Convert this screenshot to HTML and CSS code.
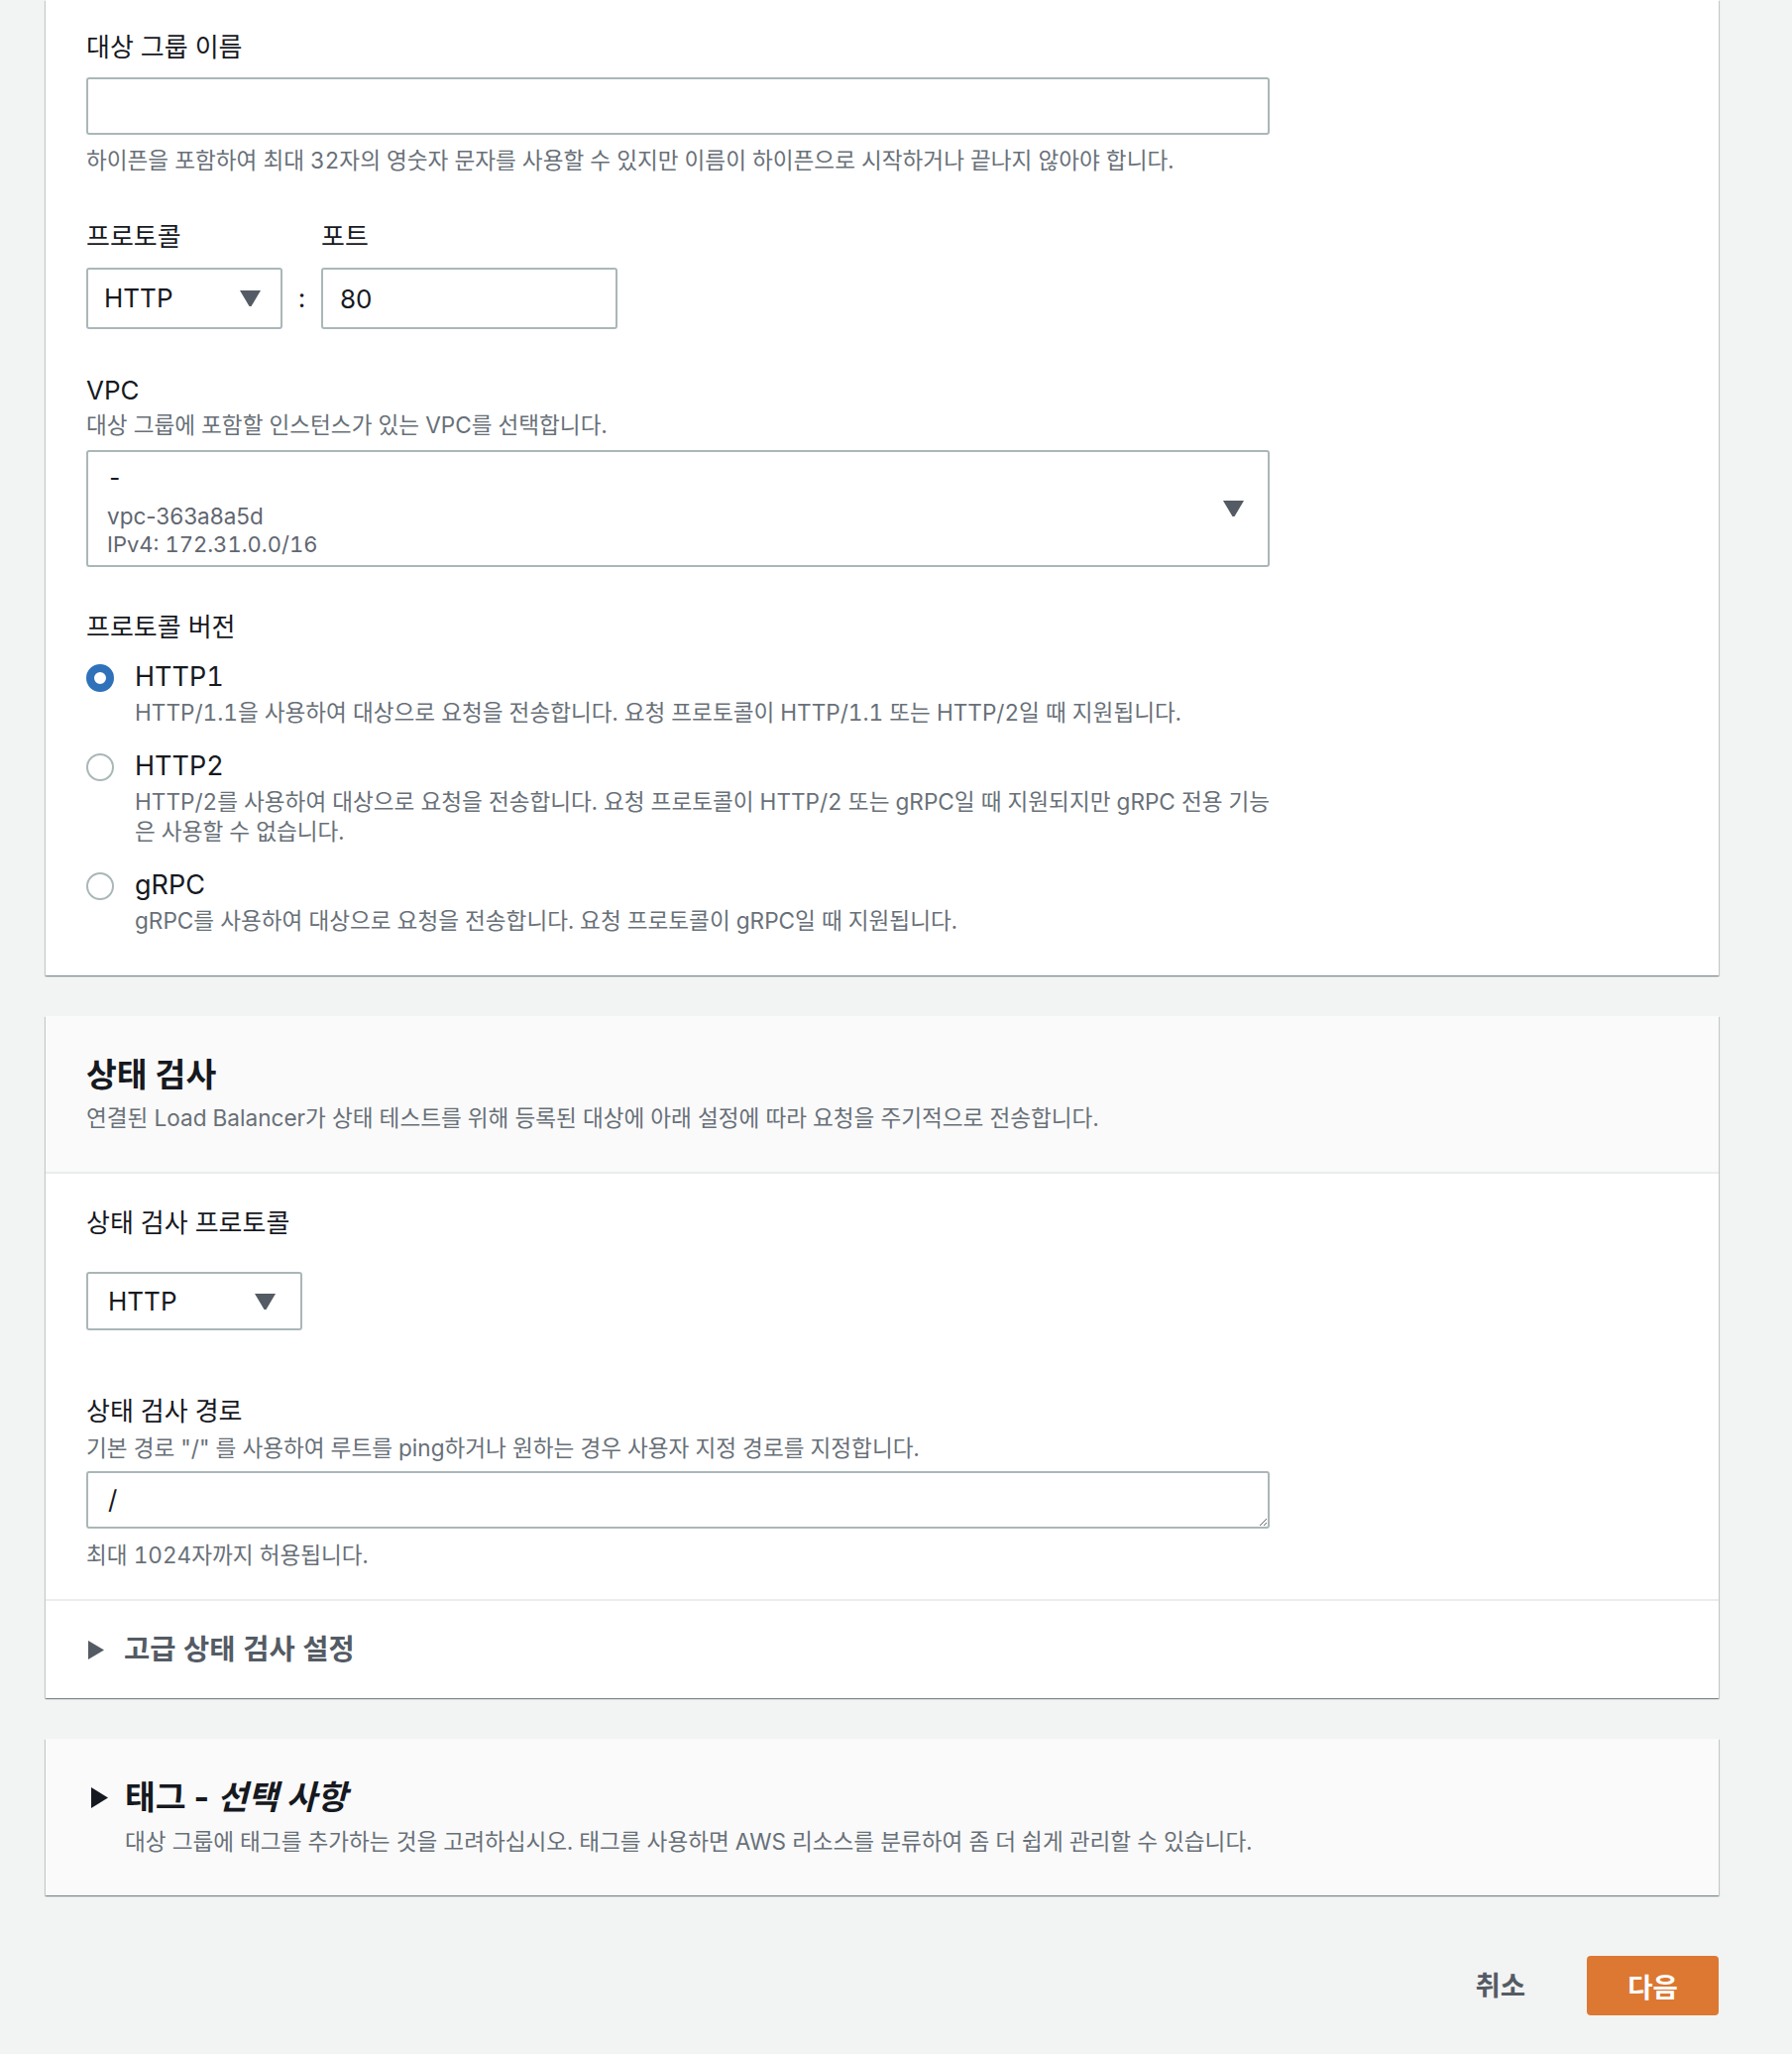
FILE: index.html
```html
<!DOCTYPE html>
<html lang="ko">
<head>
<meta charset="utf-8">
<title>대상 그룹 생성</title>
<link rel="stylesheet" href="styles.css">
</head>
<body>
<main class="page">
  <section class="card card-basic">
    <div class="field">
      <label class="label" for="tg-name">대상 그룹 이름</label>
      <input id="tg-name" class="input input-name" type="text">
      <p class="hint hint-below">하이픈을 포함하여 최대 32자의 영숫자 문자를 사용할 수 있지만 이름이 하이픈으로 시작하거나 끝나지 않아야 합니다.</p>
    </div>

    <div class="field field-gap">
      <div class="proto-grid">
        <span class="label">프로토콜</span>
        <span></span>
        <label class="label" for="tg-port">포트</label>
        <div class="select select-proto">
          <span class="select-value">HTTP</span>
          <svg class="caret" width="21" height="16" viewBox="0 0 21 16"><polygon points="0,0 21,0 11.5,16 9.5,16" fill="#545b64"/></svg>
        </div>
        <span class="colon">:</span>
        <input id="tg-port" class="input input-port" type="text" value="80">
      </div>
    </div>

    <div class="field field-gap">
      <span class="label">VPC</span>
      <p class="hint hint-desc">대상 그룹에 포함할 인스턴스가 있는 VPC를 선택합니다.</p>
      <div class="vpc-select">
        <div class="vpc-lines">
          <span class="vpc-name">-</span>
          <span class="vpc-tag vpc-tag-first">vpc-363a8a5d</span>
          <span class="vpc-tag">IPv4: 172.31.0.0/16</span>
        </div>
        <svg class="caret" width="21" height="16" viewBox="0 0 21 16"><polygon points="0,0 21,0 11.5,16 9.5,16" fill="#545b64"/></svg>
      </div>
    </div>

    <div class="field field-gap-version">
      <span class="label">프로토콜 버전</span>
      <div class="radios">
        <div class="radio">
          <span class="radio-dot radio-dot-on"></span>
          <div class="radio-body">
            <span class="radio-label">HTTP1</span>
            <p class="hint radio-desc">HTTP/1.1을 사용하여 대상으로 요청을 전송합니다. 요청 프로토콜이 HTTP/1.1 또는 HTTP/2일 때 지원됩니다.</p>
          </div>
        </div>
        <div class="radio">
          <span class="radio-dot"></span>
          <div class="radio-body">
            <span class="radio-label">HTTP2</span>
            <p class="hint radio-desc">HTTP/2를 사용하여 대상으로 요청을 전송합니다. 요청 프로토콜이 HTTP/2 또는 gRPC일 때 지원되지만 gRPC 전용 기능<br>은 사용할 수 없습니다.</p>
          </div>
        </div>
        <div class="radio">
          <span class="radio-dot"></span>
          <div class="radio-body">
            <span class="radio-label">gRPC</span>
            <p class="hint radio-desc">gRPC를 사용하여 대상으로 요청을 전송합니다. 요청 프로토콜이 gRPC일 때 지원됩니다.</p>
          </div>
        </div>
      </div>
    </div>
  </section>

  <section class="card card-health">
    <header class="card-header">
      <h2 class="title">상태 검사</h2>
      <p class="hint header-desc">연결된 Load Balancer가 상태 테스트를 위해 등록된 대상에 아래 설정에 따라 요청을 주기적으로 전송합니다.</p>
    </header>
    <div class="card-body">
      <div class="field">
        <span class="label">상태 검사 프로토콜</span>
        <div class="select select-health">
          <span class="select-value">HTTP</span>
          <svg class="caret" width="21" height="16" viewBox="0 0 21 16"><polygon points="0,0 21,0 11.5,16 9.5,16" fill="#545b64"/></svg>
        </div>
      </div>
      <div class="field field-gap-path">
        <label class="label" for="hc-path">상태 검사 경로</label>
        <p class="hint hint-desc-path">기본 경로 "/" 를 사용하여 루트를 ping하거나 원하는 경우 사용자 지정 경로를 지정합니다.</p>
        <textarea id="hc-path" class="textarea" rows="1">/</textarea>
        <p class="hint hint-below-path">최대 1024자까지 허용됩니다.</p>
      </div>
    </div>
    <div class="expander">
      <svg class="expander-arrow" width="16" height="19" viewBox="0 0 16 19"><polygon points="0,0 16,9.5 0,19" fill="#545b64"/></svg>
      <span class="expander-title">고급 상태 검사 설정</span>
    </div>
  </section>

  <section class="card card-tags">
    <div class="tags-head">
      <svg class="tags-arrow" width="17" height="21" viewBox="0 0 17 21"><polygon points="0,0 17,10.5 0,21" fill="#16191f"/></svg>
      <h2 class="title">태그 - <em>선택 사항</em></h2>
    </div>
    <p class="hint tags-desc">대상 그룹에 태그를 추가하는 것을 고려하십시오. 태그를 사용하면 AWS 리소스를 분류하여 좀 더 쉽게 관리할 수 있습니다.</p>
  </section>

  <footer class="actions">
    <button class="btn-link" type="button">취소</button>
    <button class="btn-primary" type="button">다음</button>
  </footer>
</main>
</body>
</html>
```

FILE: styles.css
```css
* {
  box-sizing: border-box;
}

body {
  margin: 0;
  background: #f2f3f3;
  font-family: Inter, "Noto Sans CJK KR", sans-serif;
  font-variant-numeric: tabular-nums;
  color: #16191f;
}

.page {
  width: 1688px;
  margin-left: 46px;
  padding-bottom: 39px;
}

.card {
  background: #ffffff;
  box-shadow: 0 1px 1px 0 rgba(0, 28, 36, 0.3), 1px 1px 1px 0 rgba(0, 28, 36, 0.15), -1px 1px 1px 0 rgba(0, 28, 36, 0.15);
}

.card-basic {
  padding: 32px 41px 40px;
}

.field {
  display: flex;
  flex-direction: column;
  align-items: flex-start;
}

.field-gap {
  margin-top: 46px;
}

.field-gap-version {
  margin-top: 45px;
}

.label {
  display: block;
  font-size: 26px;
  line-height: 32px;
  color: #16191f;
  white-space: nowrap;
}

.hint {
  margin: 0;
  font-size: 22.6px;
  line-height: 30px;
  color: #687078;
}

.hint-below {
  margin-top: 11px;
}

.hint-desc {
  margin-top: 4px;
}

.input,
.textarea {
  display: block;
  font-family: inherit;
  font-size: 26px;
  color: #16191f;
  background: #ffffff;
  border: 2px solid #aab7b8;
  border-radius: 3px;
  outline: none;
}

.input {
  height: 58px;
  padding: 0 17px;
}

.input-name {
  width: 1194px;
  margin-top: 14px;
}

.proto-grid {
  display: grid;
  grid-template-columns: 198px 39px 299px;
  grid-template-rows: 32px 62px;
  row-gap: 15px;
  align-items: center;
}

.input-port {
  width: 299px;
  height: 62px;
}

.colon {
  font-size: 26px;
  text-align: center;
  line-height: 62px;
}

.select {
  display: flex;
  align-items: center;
  justify-content: space-between;
  border: 2px solid #aab7b8;
  border-radius: 3px;
  background: #ffffff;
}

.select-value {
  font-size: 26px;
  line-height: 34px;
  color: #16191f;
}

.select-proto {
  width: 198px;
  height: 62px;
  padding: 0 20px 0 16px;
}

.select-health {
  width: 218px;
  height: 59px;
  margin-top: 33px;
  padding: 0 25px 0 20px;
}

.caret {
  display: block;
  flex: none;
}

.vpc-select {
  width: 1194px;
  height: 118px;
  margin-top: 10px;
  display: flex;
  align-items: flex-start;
  justify-content: space-between;
  padding: 11px 24px 0 19px;
  border: 2px solid #aab7b8;
  border-radius: 3px;
}

.vpc-select .caret {
  align-self: center;
  margin-top: -11px;
}

.vpc-lines {
  display: flex;
  flex-direction: column;
}

.vpc-name {
  font-size: 24px;
  line-height: 30px;
  color: #16191f;
}

.vpc-tag {
  font-size: 22px;
  line-height: 29px;
  color: #5f6670;
}

.vpc-tag-first {
  margin-top: 9px;
  font-variant-numeric: normal;
  font-size: 22.5px;
}

.radios {
  margin-top: 17px;
  display: flex;
  flex-direction: column;
  gap: 22px;
}

.radio {
  display: flex;
  align-items: flex-start;
  gap: 21px;
}

.radio-dot {
  flex: none;
  width: 28px;
  height: 28px;
  margin-top: 4px;
  border-radius: 50%;
  border: 2px solid #aab7b8;
  background: #ffffff;
}

.radio-dot-on {
  border: 8px solid #2f72ba;
}

.radio-body {
  display: flex;
  flex-direction: column;
}

.radio-label {
  font-size: 27px;
  line-height: 34px;
  color: #16191f;
}

.radio-desc {
  margin-top: 4px;
}

.card-health {
  margin-top: 41px;
}

.card-header {
  background: #fafafa;
  padding: 39px 41px 39px;
  border-bottom: 2px solid #eaeded;
}

.title {
  margin: 0;
  font-size: 33.5px;
  line-height: 40px;
  font-weight: 700;
  font-variant-numeric: normal;
  color: #16191f;
}

.title em {
  font-style: italic;
}

.header-desc {
  margin-top: 9px;
}

.card-body {
  padding: 34px 41px 29px;
}

.field-gap-path {
  margin-top: 66px;
}

.hint-desc-path {
  margin-top: 6px;
}

.textarea {
  width: 1194px;
  height: 58px;
  margin-top: 8px;
  padding: 10px 20px 0;
  line-height: 34px;
  resize: vertical;
  overflow: hidden;
}

.hint-below-path {
  margin-top: 12px;
}

.expander {
  display: flex;
  align-items: center;
  gap: 20px;
  border-top: 2px solid #eaeded;
  padding: 32px 41px 32px 43px;
}

.expander-arrow {
  display: block;
  flex: none;
}

.expander-title {
  font-size: 28.5px;
  line-height: 34px;
  font-weight: 700;
  color: #545b64;
}

.card-tags {
  margin-top: 41px;
  background: #fafafa;
  padding: 39px 41px 39px 46px;
}

.tags-head {
  display: flex;
  align-items: center;
  gap: 17px;
}

.tags-arrow {
  display: block;
  flex: none;
}

.tags-desc {
  margin-top: 10px;
  padding-left: 34px;
}

.actions {
  margin-top: 61px;
  display: flex;
  justify-content: flex-end;
  align-items: center;
}

.btn-link {
  border: none;
  background: none;
  padding: 0;
  margin-right: 62px;
  font-family: inherit;
  font-size: 27.5px;
  font-weight: 700;
  color: #545b64;
  line-height: 34px;
}

.btn-primary {
  width: 133px;
  height: 60px;
  border: none;
  border-radius: 4px;
  background: #dc7832;
  color: #ffffff;
  font-family: inherit;
  font-size: 27.5px;
  font-weight: 700;
}
```
